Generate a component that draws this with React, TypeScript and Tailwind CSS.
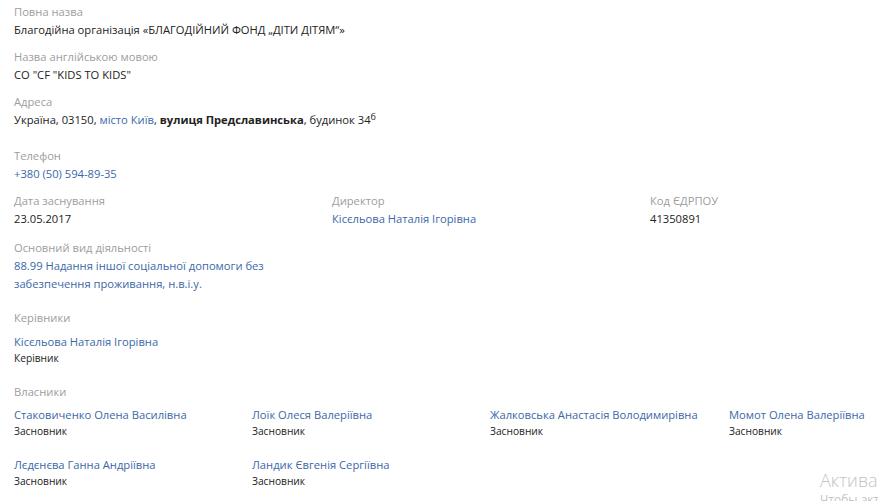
import React from 'react';

const LINK = 'text-[#3b68a8]';

const OWNERS = [
  { name: 'Стаковиченко Олена Василівна', role: 'Засновник' },
  { name: 'Лоїк Олеся Валеріївна', role: 'Засновник' },
  { name: 'Жалковська Анастасія Володимирівна', role: 'Засновник' },
  { name: 'Момот Олена Валеріївна', role: 'Засновник' },
  { name: 'Лєдєнєва Ганна Андріївна', role: 'Засновник' },
  { name: 'Ландик Євгенія Сергіївна', role: 'Засновник' },
];

function Label({ children }: { children: React.ReactNode }) {
  return <div className="text-[#9d9d9d]">{children}</div>;
}

export default function App() {
  return (
    <div
      className="relative h-[501px] w-[878px] overflow-hidden bg-white text-[11.2px] leading-[18px] text-[#222]"
      style={{ fontFamily: '"Open Sans", "Noto Sans", sans-serif' }}
    >
      <div className="px-[14px] pt-[3px]">
        {/* Назви */}
        <Label>Повна назва</Label>
        <div>Благодійна організація «БЛАГОДІЙНИЙ ФОНД „ДІТИ ДІТЯМ“»</div>

        <div className="mt-[9px]">
          <Label>Назва англійською мовою</Label>
          <div>CO "CF "KIDS TO KIDS"</div>
        </div>

        <div className="mt-[9px]">
          <Label>Адреса</Label>
          <div>
            Україна, 03150, <span className={LINK}>місто Київ</span>,{' '}
            <span className="font-bold">вулиця Предславинська</span>, будинок 34
            <sup className="text-[9px]">б</sup>
          </div>
        </div>

        <div className="mt-[18px]">
          <Label>Телефон</Label>
          <div className={LINK}>+380 (50) 594-89-35</div>
        </div>

        <div className="mt-[9px] grid grid-cols-[318px_318px_1fr]">
          <div>
            <Label>Дата заснування</Label>
            <div>23.05.2017</div>
          </div>
          <div>
            <Label>Директор</Label>
            <div className={LINK}>Кісєльова Наталія Ігорівна</div>
          </div>
          <div>
            <Label>Код ЄДРПОУ</Label>
            <div>41350891</div>
          </div>
        </div>

        <div className="mt-[11px]">
          <Label>Основний вид діяльності</Label>
          <div className={`${LINK} w-[262px]`}>
            88.99 Надання іншої соціальної допомоги без забезпечення проживання, н.в.і.у.
          </div>
        </div>

        <div className="mt-[16px]">
          <Label>Керівники</Label>
          <div className={`${LINK} mt-[6px]`}>Кісєльова Наталія Ігорівна</div>
          <div className="text-[10.2px] leading-[14px]">Керівник</div>
        </div>

        <div className="mt-[18px]">
          <Label>Власники</Label>
          <div className="mt-[5px] grid grid-cols-[238px_238px_239px_1fr] gap-y-[18px]">
            {OWNERS.map((o) => (
              <div key={o.name} className="whitespace-nowrap">
                <div className={LINK}>{o.name}</div>
                <div className="text-[10.2px] leading-[14px]">{o.role}</div>
              </div>
            ))}
          </div>
        </div>
      </div>

      {/* Windows activation watermark */}
      <div className="pointer-events-none absolute left-[820px] top-[467px] whitespace-nowrap text-[#c4c4c4]">
        <div className="text-[18px] font-light leading-[26px]">Активация Windows</div>
        <div className="text-[12px] leading-[14px]">Чтобы активировать Windows, перейдите в раздел</div>
      </div>
    </div>
  );
}
